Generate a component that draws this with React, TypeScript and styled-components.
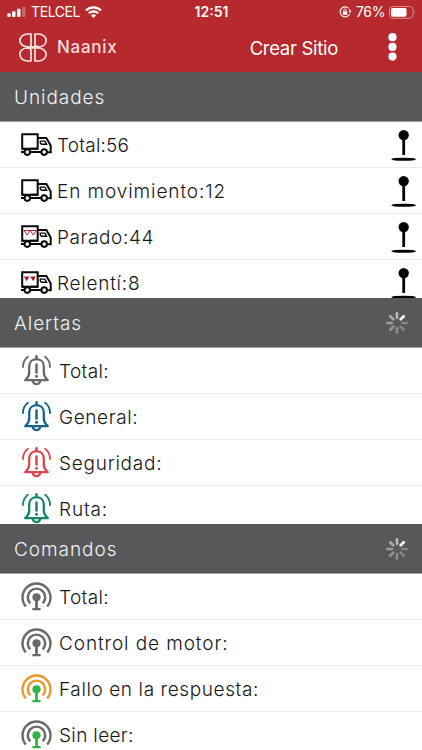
import React from "react";
import styled, { createGlobalStyle } from "styled-components";

const GlobalStyle = createGlobalStyle`
  * { box-sizing: border-box; }
  html, body { margin: 0; padding: 0; background: #fff; }
  body { font-family: Inter, "Open Sans", sans-serif; color: #171717; }
  svg { display: block; flex: none; overflow: visible; }
`;

const Screen = styled.div`
  display: flex;
  flex-direction: column;
  width: 422px;
  height: 750px;
  overflow: hidden;
  background: #fff;
`;

const TopArea = styled.header`
  height: 72px;
  flex: none;
  background: #b6292e;
  color: #fff;
`;

const StatusBar = styled.div`
  display: grid;
  grid-template-columns: 1fr auto 1fr;
  align-items: center;
  height: 24px;
  padding: 0 6px 0 7px;
  font-size: 14px;
  line-height: 24px;
`;

const StatusGroup = styled.div<{ $end?: boolean }>`
  display: flex;
  align-items: center;
  justify-content: ${(p) => (p.$end ? "flex-end" : "flex-start")};
  gap: 5px;
  letter-spacing: -0.4px;
`;

const Clock = styled.span`
  font-weight: 600;
`;

const Battery = styled.span`
  display: flex;
  align-items: center;
  gap: 4px;
`;

const AppBar = styled.div`
  display: flex;
  align-items: center;
  height: 46px;
  padding: 0 25px 0 19px;
`;

const Brand = styled.span`
  flex: 1;
  margin-left: 10px;
  font-size: 17px;
  font-weight: 500;
  line-height: 24px;
  letter-spacing: 0.7px;
  color: #f5dcdd;
`;

const Action = styled.span`
  margin-right: 50px;
  padding-top: 2px;
  font-size: 18.5px;
  line-height: 24px;
  letter-spacing: -0.3px;
`;

const Section = styled.section`
  display: flex;
  flex-direction: column;
  height: 226px;
  flex: none;
  overflow: hidden;
`;

const SectionHeader = styled.div`
  display: flex;
  align-items: center;
  justify-content: space-between;
  height: 50px;
  flex: none;
  padding: 1px 13px 0 14px;
  border-bottom: 1px solid #a3a3a4;
  background: #575859;
  background-clip: padding-box;
  color: #f2f2f2;
  font-size: 19px;
  font-weight: 300;
`;

const List = styled.div`
  flex: 1;
  min-height: 0;
  overflow: hidden;
`;

const Row = styled.div`
  display: flex;
  align-items: center;
  height: 46px;
  padding: 0 5px 0 21px;
  border-bottom: 1px solid #ececec;
`;

const Label = styled.span<{ $gap: number; $track: number }>`
  flex: 1;
  margin-left: ${(p) => p.$gap}px;
  padding-top: 2px;
  font-size: 19px;
  font-weight: 300;
  line-height: 26px;
  letter-spacing: ${(p) => p.$track}px;
  white-space: nowrap;
`;

const Heading = styled.span`
  letter-spacing: 0.95px;
`;

const Signal = () => (
  <svg width="19" height="10" viewBox="0 0 19 10" fill="#fff">
    <rect x="0.3" y="6.2" width="3.4" height="3.8" rx="0.8" />
    <rect x="5.1" y="4.2" width="3.4" height="5.8" rx="0.8" />
    <rect x="10.1" y="1.8" width="3.4" height="8.2" rx="0.8" />
    <rect x="15.1" y="0" width="3.4" height="10" rx="0.8" opacity="0.3" />
  </svg>
);

const Wifi = () => (
  <svg width="17" height="12" viewBox="0 0 17 12" fill="none" stroke="#fff" strokeWidth="2.2">
    <path d="M1 4.4a10.6 10.6 0 0 1 15 0M3.8 7.3a6.7 6.7 0 0 1 9.4 0" />
    <path d="M8.5 12 6 9.5a3.6 3.6 0 0 1 5 0z" fill="#fff" stroke="none" />
  </svg>
);

const RotationLock = () => (
  <svg width="12" height="12" viewBox="0 0 12 12" fill="none" stroke="#fff" strokeWidth="1.1">
    <path d="M9.7 2.4A5 5 0 1 0 10.8 7.6" />
    <path d="M10.600 3.300a5 5 0 0 1 .5 2.300" />
    <path d="m9.400 5 1.800 2.100L12.500 5z" fill="#fff" stroke="none" />
    <rect x="3.8" y="5.3" width="4.4" height="3.4" rx="0.5" fill="#fff" stroke="none" />
    <path d="M4.700 5.500V4.400a1.300 1.300 0 0 1 2.600 0v1.100" strokeWidth="0.9" />
  </svg>
);

const BatteryIcon = () => (
  <svg width="27" height="13" viewBox="0 0 27 13">
    <rect x="0.5" y="0.5" width="23.5" height="11.8" rx="3.4" fill="none" stroke="#d98a8d" />
    <rect x="2" y="2" width="15.6" height="8.8" rx="2" fill="#fff" />
    <path d="M25.300 4.300q1.600 2 0 4.200z" fill="#d98a8d" />
  </svg>
);

const Logo = () => (
  <svg width="28" height="29" viewBox="0 0 28 29" fill="none" stroke="#fbe3e4" strokeWidth="1.700" strokeLinejoin="round" strokeLinecap="round">
    <path d="M12 12.500V1H8.800C4.300 1 .9 3.800.9 7.400s3.300 6.500 8 6.500H19" />
    <path d="M20 13.900c4.200-.3 7.100-2.800 7.100-6.500C27.100 3.800 23.700 1 19.200 1H16v10.300c0 1.600 1.400 2.500 4 2.600z" />
    <path d="M8 15c-4.200.3-7.100 2.800-7.100 6.500 0 3.700 3.400 6.500 7.900 6.500H12V17.600C12 16 10.600 15.100 8 15z" />
    <path d="M16 16.500V28h3.200c4.500 0 7.900-2.800 7.900-6.500S23.800 15 19.100 15H9" />
  </svg>
);

const Kebab = () => (
  <svg width="9" height="28" viewBox="0 0 9 28" fill="#fff">
    <circle cx="4.5" cy="4.200" r="4.100" />
    <circle cx="4.5" cy="13.900" r="4.100" />
    <circle cx="4.5" cy="23.600" r="4.100" />
  </svg>
);

type Mark = "none" | "outline" | "solid";

const Truck = ({ mark }: { mark: Mark }) => (
  <svg width="31" height="23" viewBox="0 0 31 23" fill="none" stroke="#080808" strokeWidth="2">
    <path d="M3.300 15.800H1.200V1.300h15.500v14.500H9.500" />
    <path d="M16.700 5.100h8.700l4.300 7.300v6.900h-2.600M0 19.100h3.200M9.300 19.100h10.800M1.500 15.800h15.200" />
    <path d="M19.300 8.100h4.600l1.700 3.100h-4.200c-1.300 0-2.100-.7-2.100-1.600z" strokeWidth="1.400" />
    <circle cx="6.300" cy="19.100" r="2.800" fill="#fff" />
    <circle cx="23.200" cy="19.100" r="2.800" fill="#fff" />
    {mark === "outline" && (
      <path
        d="M2.300 5.500h13.600M3.200 5.800l2.900 4.300 2.700-4.300M9.600 5.800l2.600 4.300 2.900-4.300"
        stroke="#c0202b"
        strokeWidth="1"
      />
    )}
    {mark === "solid" && (
      <path d="M2.900 5.500h5.400L5.700 10.300zM9.300 5.500h5.600l-2.800 4.800z" fill="#b5121d" stroke="none" />
    )}
  </svg>
);

const Pin = () => (
  <svg width="26" height="32" viewBox="0 0 26 32" fill="#050505">
    <circle cx="12.700" cy="6.100" r="5.200" />
    <path d="M11.300 9h2.800v17h-2.800z" />
    <path d="M.2 30.200q1.200-1.400 12.400-1.400t12.500 1.400q-1.300 1.500-12.500 1.500T.2 30.200z" />
  </svg>
);

const Bell = ({ color }: { color: string }) => (
  <svg width="30" height="31" viewBox="0 0 30 31" fill="none" stroke={color} strokeWidth="2.300" strokeLinecap="round" strokeLinejoin="round">
    <path d="M15.500 1.300v2.500" strokeWidth="2.500" />
    <path d="M15.500 4.200c-4.500 0-7.300 3.200-7.300 7.500v6.100c0 3.600-1.700 5-4 7.400h22.600c-2.300-2.400-4-3.800-4-7.400v-6.100c0-4.300-2.800-7.500-7.300-7.500z" />
    <path d="M11.800 26.100c.6 1.900 1.900 3 3.700 3s3.100-1.100 3.700-3" />
    <path d="M15.500 9.600v7.900" strokeWidth="2.500" />
    <circle cx="15.500" cy="21.300" r="1.500" fill={color} stroke="none" />
    <path d="M6.900 1.800C3.800 4.300 1.900 7.900 2 12M24.100 1.800c3.100 2.500 5 6.100 4.900 10.200" strokeWidth="1.800" />
  </svg>
);

const Antenna = ({ ring, mast }: { ring: string; mast: string }) => (
  <svg width="31" height="29" viewBox="0 0 31 29" fill="none" stroke={ring} strokeWidth="2.400">
    <path d="M4.800 24.500A14 14 0 1 1 26.200 24.500" />
    <path d="M9.200 21.300A8.700 8.700 0 1 1 21.800 21.300" />
    <circle cx="15.500" cy="15.300" r="4.100" fill={mast} stroke="none" />
    <path d="M14.100 18h2.800v8h2.700v2.300h-8.200V26h2.700z" fill={mast} stroke="none" />
  </svg>
);

const Spinner = () => (
  <svg width="24" height="24" viewBox="-12 -12 24 24" strokeWidth="2.700" strokeLinecap="round">
    {["#b9b9ba", "#f6f6f6", "#858586", "#858586", "#8b8b8c", "#929293", "#9d9d9e", "#a9a9aa"].map((c, i) => (
      <path key={i} d="M0-5.200V-9.600" stroke={c} transform={`rotate(${i * 45})`} />
    ))}
  </svg>
);

const units: { text: string; mark: Mark; track: number }[] = [
  { text: "Total:56", mark: "none", track: 0.2 },
  { text: "En movimiento:12", mark: "none", track: 0.9 },
  { text: "Parado:44", mark: "outline", track: 0.6 },
  { text: "Relentí:8", mark: "solid", track: 0.75 },
];

const alerts = [
  { text: "Total:", color: "#68696a", track: 0.35 },
  { text: "General:", color: "#17658b", track: 0.6 },
  { text: "Seguridad:", color: "#d9474a", track: 0.75 },
  { text: "Ruta:", color: "#178566", track: 0.85 },
];

const commands = [
  { text: "Total:", ring: "#68696a", mast: "#68696a", track: 0.35 },
  { text: "Control de motor:", ring: "#68696a", mast: "#68696a", track: 0.9 },
  { text: "Fallo en la respuesta:", ring: "#ed972b", mast: "#34b34a", track: 0.6 },
  { text: "Sin leer:", ring: "#68696a", mast: "#34b34a", track: 0.35 },
];

export default function App() {
  return (
    <>
      <GlobalStyle />
      <Screen>
        <TopArea>
          <StatusBar>
            <StatusGroup>
              <Signal />
              <span>TELCEL</span>
              <Wifi />
            </StatusGroup>
            <Clock>12:51</Clock>
            <StatusGroup $end>
              <RotationLock />
              <Battery>
                <span>76%</span>
                <BatteryIcon />
              </Battery>
            </StatusGroup>
          </StatusBar>
          <AppBar>
            <Logo />
            <Brand>Naanix</Brand>
            <Action>Crear Sitio</Action>
            <Kebab />
          </AppBar>
        </TopArea>
        <Section>
          <SectionHeader>
            <Heading>Unidades</Heading>
          </SectionHeader>
          <List>
            {units.map((u) => (
              <Row key={u.text}>
                <Truck mark={u.mark} />
                <Label $gap={5} $track={u.track}>{u.text}</Label>
                <Pin />
              </Row>
            ))}
          </List>
        </Section>
        <Section>
          <SectionHeader>
            <Heading>Alertas</Heading>
            <Spinner />
          </SectionHeader>
          <List>
            {alerts.map((a) => (
              <Row key={a.text}>
                <Bell color={a.color} />
                <Label $gap={8} $track={a.track}>{a.text}</Label>
              </Row>
            ))}
          </List>
        </Section>
        <Section>
          <SectionHeader>
            <Heading>Comandos</Heading>
            <Spinner />
          </SectionHeader>
          <List>
            {commands.map((c) => (
              <Row key={c.text}>
                <Antenna ring={c.ring} mast={c.mast} />
                <Label $gap={7} $track={c.track}>{c.text}</Label>
              </Row>
            ))}
          </List>
        </Section>
      </Screen>
    </>
  );
}
